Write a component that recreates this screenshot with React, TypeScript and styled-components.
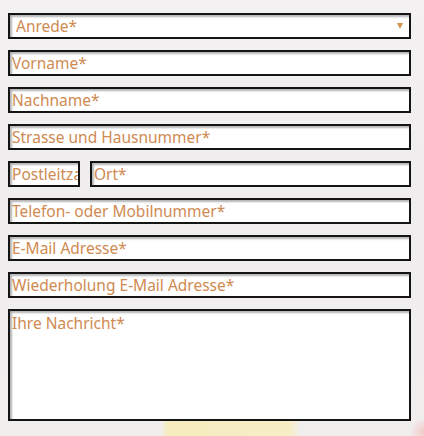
import React from "react";
import styled, { createGlobalStyle, css } from "styled-components";

const Global = createGlobalStyle`
  html, body { margin: 0; padding: 0; }
  body {
    width: 424px;
    height: 436px;
    overflow: hidden;
    font-family: "Noto Sans", "Open Sans", sans-serif;
    background:
      linear-gradient(90deg, rgba(246,236,190,0) 160px, #f6ecbf 168px, #f7eec6 290px, rgba(246,236,190,0) 300px) 0 421px / 100% 15px no-repeat,
      radial-gradient(ellipse 14px 14px at 424px 432px, #f2c9c6 0%, rgba(242,201,198,0) 100%),
      linear-gradient(180deg, #f3f1f1 0%, #efeded 40%, #f1eeee 100%);
  }
  * { box-sizing: border-box; }
`;

const Form = styled.form`
  display: flex;
  flex-direction: column;
  gap: 11px;
  padding: 13px 0 0 8px;
  width: 411px;
`;

const Row = styled.div`
  display: flex;
  gap: 10px;
`;

const fieldBase = css`
  display: block;
  box-sizing: border-box;
  width: 100%;
  height: 26px;
  margin: 0;
  border: 2px solid #141414;
  background: #fff;
  box-shadow: inset 2px 2px 2px rgba(120, 120, 120, 0.55);
  font-family: "Noto Sans", "Open Sans", sans-serif;
  font-size: 15.5px;
  color: #cf8a52;
  padding: 0 0 0 2px;
  outline: none;
  &::placeholder { color: #cf8a52; opacity: 1; }
`;

const Input = styled.input<{ $w?: number }>`
  ${fieldBase}
  flex: ${(p) => (p.$w ? "none" : "1")};
  ${(p) => p.$w && css`width: ${p.$w}px;`}
`;

const SelectWrap = styled.div`
  ${fieldBase}
  display: flex;
  align-items: center;
  justify-content: space-between;
  padding: 0 6px 0 6px;
`;

const Arrow = styled.span`
  width: 0;
  height: 0;
  border-left: 3.5px solid transparent;
  border-right: 3.5px solid transparent;
  border-top: 6px solid #d4944f;
  margin-top: -1px;
`;

const TextArea = styled.textarea`
  ${fieldBase}
  height: 112px;
  resize: none;
  padding: 2px 2px;
  line-height: 20px;
`;

export default function App() {
  return (
    <>
      <Global />
      <Form>
        <SelectWrap>
          <span>Anrede*</span>
          <Arrow />
        </SelectWrap>
        <Input placeholder="Vorname*" />
        <Input placeholder="Nachname*" />
        <Input placeholder="Strasse und Hausnummer*" />
        <Row>
          <Input $w={72} placeholder="Postleitzahl*" />
          <Input placeholder="Ort*" />
        </Row>
        <Input placeholder="Telefon- oder Mobilnummer*" />
        <Input placeholder="E-Mail Adresse*" />
        <Input placeholder="Wiederholung E-Mail Adresse*" />
        <TextArea placeholder="Ihre Nachricht*" />
      </Form>
    </>
  );
}
